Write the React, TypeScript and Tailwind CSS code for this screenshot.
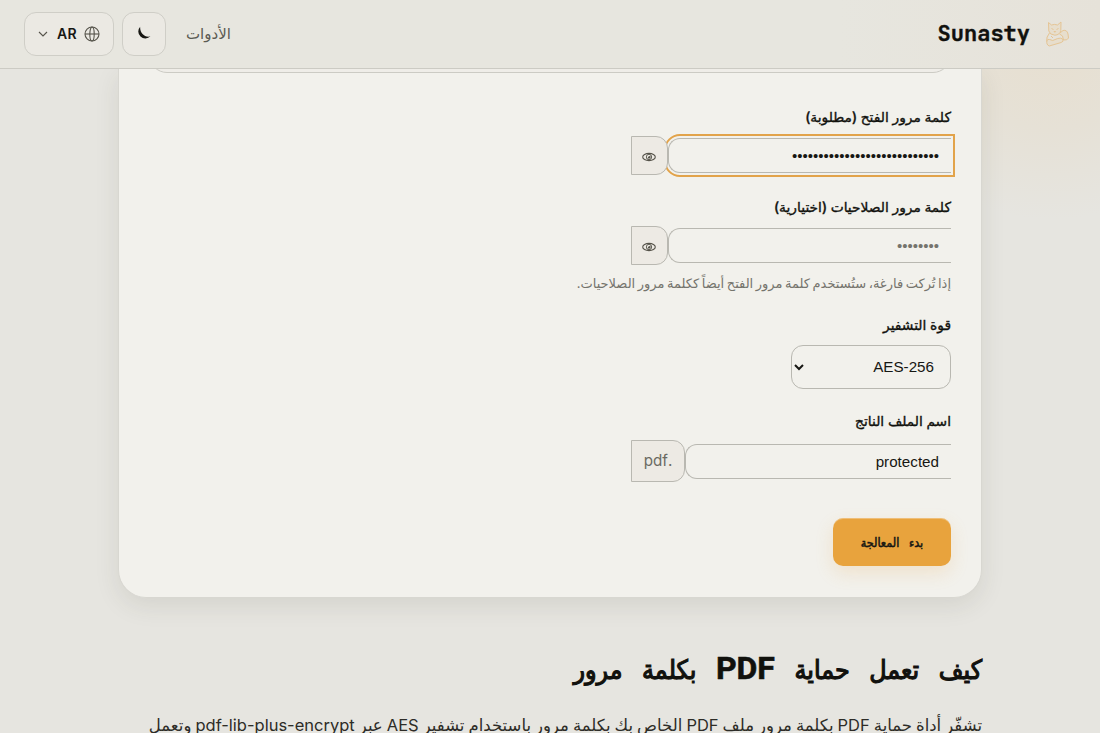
import { ReactNode } from 'react';

interface FieldProps {
  label: string;
  className?: string;
  children: ReactNode;
}

function Field({ label, className = '', children }: FieldProps) {
  return (
    <div className={className}>
      <label className="block h-[22px] text-[13.8px] leading-[22px] font-medium text-[#11110d] [-webkit-text-stroke:0.35px_#11110d]">
        {label}
      </label>
      {children}
    </div>
  );
}

function EyeIcon() {
  return (
    <svg width="14" height="10" viewBox="0 0 14 10" fill="none" stroke="#55534a" strokeWidth="1.1">
      <ellipse cx="7" cy="5" rx="6.3" ry="3.6" />
      <circle cx="7" cy="5" r="2.7" strokeWidth="0.9" />
      <path d="M8.5 3.5v3h-3q0-2 3-3Z" fill="#55534a" stroke="none" />
    </svg>
  );
}

function GlobeIcon() {
  return (
    <svg width="16" height="16" viewBox="0 0 16 16" fill="none" stroke="#55534a" strokeWidth="1.1">
      <circle cx="8" cy="8" r="7" />
      <ellipse cx="8" cy="8" rx="2.2" ry="7" />
      <path d="M1 8h14" />
    </svg>
  );
}

function CatLogo() {
  return (
    <svg width="26" height="28" viewBox="0 0 26 28" fill="#e8d9bf" fillOpacity="0.5" stroke="#e5c595" strokeWidth="1" strokeLinejoin="round">
      <path d="M5.5 13q-3.5 4-2.8 8.5M16 13l3-2.5q4-1 5 3.5l.5 4q-1 2.5-5 2l-1-4-3-2" />
      <path d="M3 20.5q-1 4 2.2 5.5l12-3.5q3-1 1.5-3.5-2-1.5-5-.5l-5 2-3-1q-2-.5-2.7 1Z" />
      <path d="M4.5 2.5 7.5 5q3-1.2 6 0l3.5-3-.2 8.5q-1 4.5-6 4.7-5-.4-6-4.2Z" />
      <path d="M7.5 8.5l2 1M12.5 9.5l2-1M10 11.5h1.6l-.8.8ZM7 16l2 2" />
    </svg>
  );
}

function PasswordRow({ value, placeholder, focused }: { value?: string; placeholder?: string; focused?: boolean }) {
  return (
    <div className="flex w-80 items-center">
      <input
        type="password"
        defaultValue={value}
        placeholder={placeholder}
        className={`h-[35px] min-w-0 flex-1 rounded-l-xl border border-r-0 border-[#b9b8b1] bg-[#f2f1ec] px-3 font-['Liberation_Sans',sans-serif] text-[15px] text-[#171713] placeholder:text-[#75746d] ${
          focused ? 'outline-2 outline-offset-2 outline-[#e2a34a]' : 'outline-none'
        }`}
      />
      <button
        type="button"
        className="relative flex h-[39px] w-[37px] items-center justify-center rounded-r-xl border border-[#b9b8b1] bg-[#edeae4] pt-0.5 pr-px"
      >
        <EyeIcon />
      </button>
    </div>
  );
}

export default function App() {
  return (
    <div
      dir="rtl"
      className="flex h-[733px] flex-col overflow-hidden bg-[#e6e5e0] bg-[radial-gradient(circle_at_1050px_40px,#e7dfd0_0px,#e6e1d6_90px,#e6e5e0_180px)] font-[Inter,'Noto_Sans','DejaVu_Sans',sans-serif] text-[#171713]"
    >
      <header className="z-10 flex h-[69px] shrink-0 items-center justify-between border-b border-[#cccbc4] bg-[linear-gradient(to_left,#e6e2d9_0px,#e7e6df_260px)] pr-[30px] pl-6">
        <div className="flex items-center gap-[14px]">
          <CatLogo />
          <span className="pb-0.5 font-['JetBrains_Mono','DejaVu_Sans_Mono',monospace] text-[22px] font-bold text-[#11110d] [-webkit-text-stroke:0.4px_#11110d]">
            Sunasty
          </span>
        </div>
        <div className="flex items-center gap-2">
          <a className="ml-3 text-[15px] text-[#5b5a53]">الأدوات</a>
          <button type="button" className="flex size-11 items-center justify-center rounded-xl border border-[#cfcec7] bg-[#ebe9e3]">
            <svg width="14" height="14" viewBox="0 0 14 14" fill="#171713" className="mb-0.5">
              <path d="M3.2.7A6.8 6.8 0 1 0 13.4 10.3C8 12 2.5 7 3.2.7Z" />
            </svg>
          </button>
          <button
            type="button"
            className="flex h-11 w-[90px] items-center justify-center rounded-xl border border-[#cfcec7] bg-[#ebe9e3]"
          >
            <GlobeIcon />
            <span className="mr-[7px] ml-[9px] pb-px text-[14px] font-semibold tracking-[0.3px]">AR</span>
            <svg width="10" height="6" viewBox="0 0 10 6" fill="none" stroke="#55534a" strokeWidth="1.1">
              <path d="m1 1 4 4 4-4" />
            </svg>
          </button>
        </div>
      </header>

      <main className="mx-auto w-[864px] shrink-0">
        <section className="h-[529px] rounded-b-[28px] border border-t-0 border-[#d8d7d1] bg-[#f2f1ec] px-[30px] shadow-[0_8px_24px_rgba(60,55,40,0.10)]">
          <div className="h-[4px] overflow-hidden">
            <div className="-mt-9 h-10 rounded-b-[18px] border border-[#cccbc4] bg-[#efede8]" />
          </div>

          <Field label="كلمة مرور الفتح (مطلوبة)" className="mt-[33px]">
            <div className="mt-[8px]">
              <PasswordRow value="correct-horse-battery-staple" focused />
            </div>
          </Field>

          <Field label="كلمة مرور الصلاحيات (اختيارية)" className="mt-[21px]">
            <div className="mt-[8px]">
              <PasswordRow placeholder="••••••••" />
            </div>
            <p className="mt-[7px] text-[13px] leading-[22px] [word-spacing:-1.1px] text-[#75746d]">
              إذا تُركت فارغة، ستُستخدم كلمة مرور الفتح أيضاً ككلمة مرور الصلاحيات.
            </p>
          </Field>

          <Field label="قوة التشفير" className="mt-[20px]">
            <select className="mt-[9px] block h-11 w-40 rounded-xl border border-[#b9b8b1] bg-[#f2f1ec] px-3 pb-0.5 font-['Liberation_Sans',sans-serif] text-[15.2px]">
              <option>AES-256</option>
              <option>AES-128</option>
            </select>
          </Field>

          <Field label="اسم الملف الناتج" className="mt-[21px]">
            <div className="mt-[8px] flex w-80 items-center">
              <input
                defaultValue="protected"
                className="h-[35px] min-w-0 flex-1 rounded-l-xl border border-r-0 border-[#b9b8b1] bg-[#f2f1ec] px-3 font-['Liberation_Sans',sans-serif] text-[15.2px] outline-none"
              />
              <span className="flex h-[42px] w-[54px] items-center justify-center rounded-r-xl border border-[#b9b8b1] bg-[#edeae4] text-[15.2px] text-[#6b6a62]">
                .pdf
              </span>
            </div>
          </Field>

          <button
            type="button"
            className="mt-[36px] block h-12 w-[118px] rounded-[10px] bg-[#e8a33d] pt-0.5 font-['DejaVu_Sans_Condensed','DejaVu_Sans',sans-serif] text-[12.5px] font-normal [word-spacing:6px] text-[#171713] shadow-[0_7px_18px_rgba(232,163,61,0.18),inset_0_1px_0_rgba(255,255,255,0.3)] [-webkit-text-stroke:0.5px_#171713]"
          >
            بدء المعالجة
          </button>
        </section>

        <h2 className="mt-[50px] h-[44px] font-['DejaVu_Sans_Condensed','DejaVu_Sans',sans-serif] text-[26.5px] leading-[41px] font-normal [word-spacing:12px] whitespace-nowrap text-[#11110d] [-webkit-text-stroke:1.1px_#11110d]">
          كيف تعمل حماية{' '}
          <span className="font-[Roboto,sans-serif] text-[32px] font-bold [-webkit-text-stroke:0.6px_#11110d]">PDF</span> بكلمة مرور
        </h2>
        <p className="mt-[18px] text-[16.5px] leading-[30px] [word-spacing:-0.6px] whitespace-nowrap text-[#2d2c27]">
          تشفّر أداة حماية PDF بكلمة مرور ملف PDF الخاص بك بكلمة مرور باستخدام تشفير AES عبر pdf-lib-plus-encrypt وتعمل
        </p>
      </main>
    </div>
  );
}
